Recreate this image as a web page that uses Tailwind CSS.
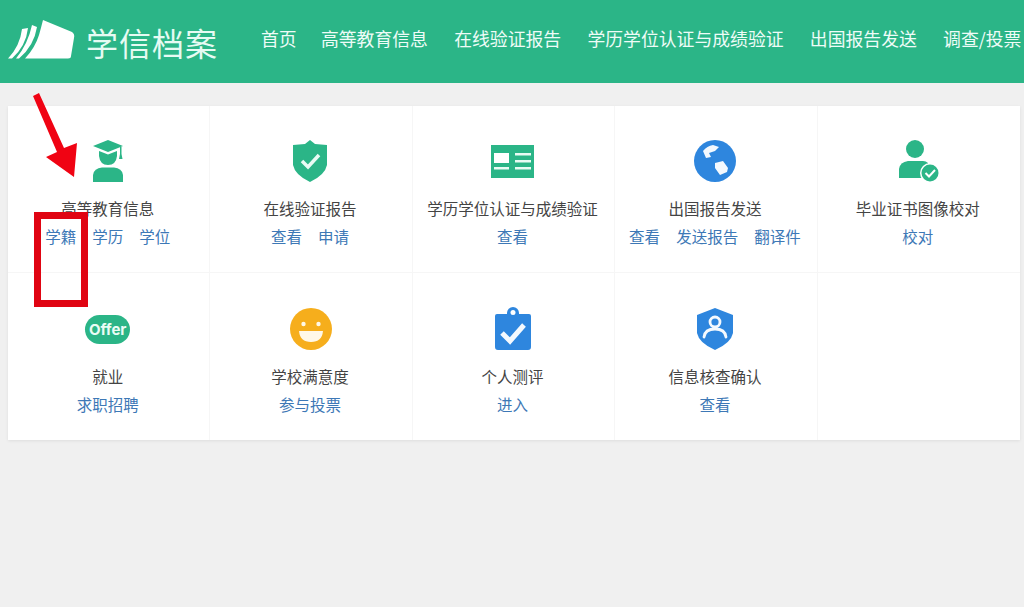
<!DOCTYPE html>
<html lang="zh"><head><meta charset="utf-8"><script src="https://cdn.jsdelivr.net/npm/@tailwindcss/browser@4"></script></head>
<body class="relative w-[1024px] h-[607px] overflow-hidden bg-[#f0f0f0] font-['Noto_Sans_CJK_SC',sans-serif]">
<header class="h-[83px] bg-[#2bb587] flex items-center overflow-hidden whitespace-nowrap">
  <svg class="ml-[8px] w-[68px] h-[42px] shrink-0 -mt-[2px]" viewBox="0 0 68 42" fill="#fff"><path d="M35 0 L64 12 Q67 14 66 18 L63 36 Q63 38.500 60 38.500 L17 38.500 Q27 28 31 15 Q33 8 35 0 Z"/><path d="M24 5 L29 7 Q26 26 11 38.500 L8 38.500 Q20 24 24 5 Z"/><path d="M14 9 L20 8 Q18 26 4 38.500 L0 38.500 Q12 26 14 9 Z"/></svg>
  <div class="ml-[10px] text-[32px] leading-none tracking-[1px] font-normal text-[#e6fbf3] w-[137px] shrink-0">学信档案</div>
  <nav class="ml-[38px] flex gap-[26.2px] text-[17.85px] leading-none text-[#eefcf7] shrink-0 -mt-[5px]">
    <span class="mr-[-2px]">首页</span><span>高等教育信息</span><span>在线验证报告</span><span>学历学位认证与成绩验证</span><span>出国报告发送</span><span>调查/投票</span>
  </nav>
</header>
<main class="mt-[23px] mx-[8px] w-[1012px] h-[334px] bg-white shadow-[0_1px_3px_rgba(0,0,0,0.08)] grid grid-cols-5 grid-rows-2 text-[15.5px] leading-[22px]">
  <section class="flex flex-col items-center pt-[33px] pr-[2px] border-r border-b border-[#f6f6f6]">
    <svg class="h-[44px] w-[44px]" viewBox="0 0 44 44" fill="#2bb587"><path d="M22 1 L37 7 L22 13 L7 7 Z"/><path d="M13 12 L22 15.500 L31 12 L31 17 Q30 26 22 26 Q14 26 13 17 Z"/><path d="M34 8 h1.500 v7 l1 5 h-3.500 l1 -5 Z"/><path d="M7 43 L7 36 Q8 29 16 28.500 L28 28.500 Q36 29 37 36 L37 43 Z"/></svg>
    <div class="mt-[14px] text-[#444]">高等教育信息</div>
    <div class="mt-[6px] flex gap-[16px] text-[#3d78b6]"><span>学籍</span><span>学历</span><span>学位</span></div>
  </section>
  <section class="flex flex-col items-center pt-[33px] pr-[2px] border-r border-b border-[#f6f6f6]">
    <svg class="h-[44px] w-[44px]" viewBox="0 0 44 44" fill="#2bb587"><path d="M22 1 L27 5 L39 6 L39 26 Q37 36 22 43 Q7 36 5 26 L5 6 L17 5 Z"/><path d="M14 22 L20 28 L31 16" fill="none" stroke="#e9fbf4" stroke-width="3.500"/></svg>
    <div class="mt-[14px] text-[#444]">在线验证报告</div>
    <div class="mt-[6px] flex gap-[16px] text-[#3d78b6]"><span>查看</span><span>申请</span></div>
  </section>
  <section class="flex flex-col items-center pt-[33px] pr-[2px] border-r border-b border-[#f6f6f6]">
    <svg class="h-[44px] w-[44px]" viewBox="-1 0 44 44" fill="#2bb587"><rect y="6" width="43" height="33"/><rect x="3" y="14" width="15" height="10" fill="#fff"/><path d="M3 28h15v2.500h-15zM24 14h16v2.500h-16zM24 21h16v2.500h-16zM24 28h16v2.500h-16z" fill="#e9fbf4"/></svg>
    <div class="mt-[14px] text-[#444]">学历学位认证与成绩验证</div>
    <div class="mt-[6px] flex gap-[16px] text-[#3d78b6]"><span>查看</span></div>
  </section>
  <section class="flex flex-col items-center pt-[33px] pr-[2px] border-r border-b border-[#f6f6f6]">
    <svg class="h-[44px] w-[44px]" viewBox="0 0 44 44" fill="#2e86de"><circle cx="22" cy="22" r="21"/><path d="M10 12 Q14 7 20 6 L26 8 L22 12 L16 14 L18 18 L13 19 Z M22 24 L30 22 L35 29 L34 33 L27 36 L22 29 Z" fill="#f4f9fe"/></svg>
    <div class="mt-[14px] text-[#444]">出国报告发送</div>
    <div class="mt-[6px] flex gap-[16px] text-[#3d78b6]"><span>查看</span><span>发送报告</span><span>翻译件</span></div>
  </section>
  <section class="flex flex-col items-center pt-[33px] pr-[2px] border-b border-[#f6f6f6]">
    <svg class="h-[44px] w-[44px]" viewBox="0 0 44 44" fill="#2bb587"><circle cx="19" cy="10" r="9"/><path d="M3 39 L3 30 Q4 23 12 22 L27 22 Q30 22 32 24 L32 39 Z"/><circle cx="34" cy="34" r="10" fill="#fff"/><circle cx="34" cy="34" r="8.500"/><path d="M29.500 34 L33 37.500 L39 31" fill="none" stroke="#fff" stroke-width="2"/></svg>
    <div class="mt-[14px] text-[#444]">毕业证书图像校对</div>
    <div class="mt-[6px] flex gap-[16px] text-[#3d78b6]"><span>校对</span></div>
  </section>
  <section class="flex flex-col items-center pt-[34px] pr-[2px] border-r border-[#f6f6f6]">
    <div class="h-[44px] flex items-center"><div class="w-[45px] h-[29px] rounded-full bg-[#2bb587] flex items-center justify-center text-[15px] font-bold leading-none text-[#eafcf5] font-['Inter',sans-serif]">Offer</div></div>
    <div class="mt-[14px] text-[#444]">就业</div>
    <div class="mt-[6px] flex gap-[16px] text-[#3d78b6]"><span>求职招聘</span></div>
  </section>
  <section class="flex flex-col items-center pt-[34px] pr-[2px] border-r border-[#f6f6f6]">
    <svg class="h-[44px] w-[44px]" viewBox="-1 0 44 44"><circle cx="22" cy="22" r="21" fill="#f6ae1c"/><circle cx="14.500" cy="17" r="2.200" fill="#fff8e8"/><circle cx="29.500" cy="17" r="2.200" fill="#fff8e8"/><path d="M10 24 L34 24 Q33 35 22 35 Q11 35 10 24 Z" fill="#fff8e8"/></svg>
    <div class="mt-[14px] text-[#444]">学校满意度</div>
    <div class="mt-[6px] flex gap-[16px] text-[#3d78b6]"><span>参与投票</span></div>
  </section>
  <section class="flex flex-col items-center pt-[34px] pr-[2px] border-r border-[#f6f6f6]">
    <svg class="h-[44px] w-[44px]" viewBox="-1 0 44 44" fill="#2e86de"><path d="M6 7 Q4 7 4 9 L4 40 Q4 43 7 43 L37 43 Q40 43 40 40 L40 9 Q40 7 38 7 L28 7 L28 6 A6 6 0 0 0 16 6 L16 7 Z"/><circle cx="22" cy="5.500" r="2.500" fill="#fff"/><path d="M11 26 L19 34 L33 18" fill="none" stroke="#f4f9fe" stroke-width="5"/></svg>
    <div class="mt-[14px] text-[#444]">个人测评</div>
    <div class="mt-[6px] flex gap-[16px] text-[#3d78b6]"><span>进入</span></div>
  </section>
  <section class="flex flex-col items-center pt-[34px] pr-[2px] border-r border-[#f6f6f6]">
    <svg class="h-[44px] w-[44px]" viewBox="0 0 44 44" fill="#2e86de"><path d="M22 1 L40 8 L40 26 Q38 36 22 43 Q6 36 4 26 L4 8 Z"/><circle cx="22" cy="15" r="5" fill="none" stroke="#f4f9fe" stroke-width="2.800"/><path d="M11 30 Q12 22 22 22 Q32 22 33 30" fill="none" stroke="#f4f9fe" stroke-width="2.800" stroke-linecap="round"/></svg>
    <div class="mt-[14px] text-[#444]">信息核查确认</div>
    <div class="mt-[6px] flex gap-[16px] text-[#3d78b6]"><span>查看</span></div>
  </section>
  <section></section>
</main>
<div class="absolute left-[34px] top-[212px] w-[54px] h-[95px] border-[7px] border-[#e00412]"></div>
<svg class="absolute left-[30px] top-[90px] w-[60px] h-[100px]" viewBox="0 0 60 100" fill="#f00313"><path d="M3 6 L9 3 L34 58 L47 53 L44 87 L16 67 L27 62 Z"/></svg>
</body></html>
